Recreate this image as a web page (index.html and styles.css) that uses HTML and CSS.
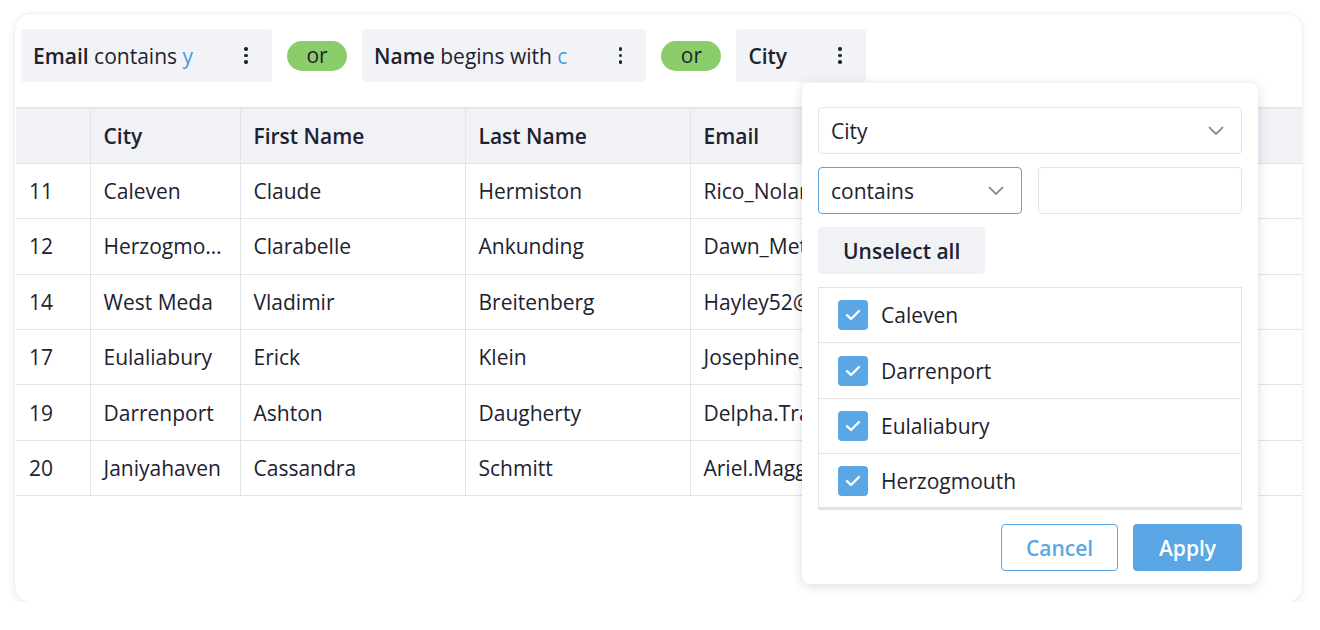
FILE: index.html
```html
<!DOCTYPE html>
<html lang="en">
<head>
<meta charset="utf-8">
<title>Filtered table</title>
<link rel="stylesheet" href="styles.css">
</head>
<body>
<div class="card">
  <div class="filters">
    <div class="chip">
      <span class="chip-text"><b>Email</b> contains <span class="val">y</span></span>
      <span class="dots"><i></i><i></i><i></i></span>
    </div>
    <span class="or">or</span>
    <div class="chip">
      <span class="chip-text"><b>Name</b> begins with <span class="val">c</span></span>
      <span class="dots"><i></i><i></i><i></i></span>
    </div>
    <span class="or">or</span>
    <div class="chip">
      <span class="chip-text"><b>City</b></span>
      <span class="dots"><i></i><i></i><i></i></span>
    </div>
  </div>

  <table class="grid">
    <colgroup>
      <col class="c-id"><col class="c-city"><col class="c-name"><col class="c-name"><col>
    </colgroup>
    <thead>
      <tr><th></th><th>City</th><th>First Name</th><th>Last Name</th><th>Email</th></tr>
    </thead>
    <tbody>
      <tr><td>11</td><td>Caleven</td><td>Claude</td><td>Hermiston</td><td>Rico_Nolan@gmail.com</td></tr>
      <tr><td>12</td><td>Herzogmouth</td><td>Clarabelle</td><td>Ankunding</td><td>Dawn_Metz@yahoo.com</td></tr>
      <tr><td>14</td><td>West Meda</td><td>Vladimir</td><td>Breitenberg</td><td>Hayley52@hotmail.com</td></tr>
      <tr><td>17</td><td>Eulaliabury</td><td>Erick</td><td>Klein</td><td>Josephine_Kub@gmail.com</td></tr>
      <tr><td>19</td><td>Darrenport</td><td>Ashton</td><td>Daugherty</td><td>Delpha.Trantow@yahoo.com</td></tr>
      <tr><td>20</td><td>Janiyahaven</td><td>Cassandra</td><td>Schmitt</td><td>Ariel.Maggio@hotmail.com</td></tr>
    </tbody>
  </table>

  <div class="panel">
    <div class="select wide">
      <span>City</span>
      <svg class="chev" width="16" height="10" viewBox="0 0 16 10"><path d="M1.5 1.5 8 8l6.5-6.5" fill="none" stroke="#8b9099" stroke-width="1.8" stroke-linecap="round" stroke-linejoin="round"/></svg>
    </div>
    <div class="pair">
      <div class="select focus">
        <span>contains</span>
        <svg class="chev" width="16" height="10" viewBox="0 0 16 10"><path d="M1.5 1.5 8 8l6.5-6.5" fill="none" stroke="#8b9099" stroke-width="1.8" stroke-linecap="round" stroke-linejoin="round"/></svg>
      </div>
      <div class="input"></div>
    </div>
    <div><button class="ghost">Unselect all</button></div>
    <ul class="list">
      <li><span class="box"><svg width="16" height="12" viewBox="0 0 16 12"><path d="M2 6.2 6 10l8-8" fill="none" stroke="#fff" stroke-width="2.4" stroke-linecap="round" stroke-linejoin="round"/></svg></span>Caleven</li>
      <li><span class="box"><svg width="16" height="12" viewBox="0 0 16 12"><path d="M2 6.2 6 10l8-8" fill="none" stroke="#fff" stroke-width="2.4" stroke-linecap="round" stroke-linejoin="round"/></svg></span>Darrenport</li>
      <li><span class="box"><svg width="16" height="12" viewBox="0 0 16 12"><path d="M2 6.2 6 10l8-8" fill="none" stroke="#fff" stroke-width="2.4" stroke-linecap="round" stroke-linejoin="round"/></svg></span>Eulaliabury</li>
      <li><span class="box"><svg width="16" height="12" viewBox="0 0 16 12"><path d="M2 6.2 6 10l8-8" fill="none" stroke="#fff" stroke-width="2.4" stroke-linecap="round" stroke-linejoin="round"/></svg></span>Herzogmouth</li>
    </ul>
    <div class="actions">
      <button class="btn cancel">Cancel</button>
      <button class="btn apply">Apply</button>
    </div>
  </div>
</div>
</body>
</html>
```
FILE: styles.css
```css
* { box-sizing: border-box; }

html, body {
  margin: 0;
  background: #ffffff;
  font-family: "Open Sans", "Noto Sans", sans-serif;
  color: #1d2230;
  font-size: 21px;
}

.card {
  position: relative;
  margin: 14px 18px 0 15px;
  height: 588px;
  background: #fff;
  border-radius: 16px;
  box-shadow: 0 0 0 1px #f1f2f4, 0 2px 8px rgba(30, 40, 60, 0.10);
  padding: 15px 0 0 1px;
}

/* filter bar */
.filters {
  display: flex;
  align-items: center;
  gap: 15px;
  padding-left: 5px;
}

.chip {
  display: flex;
  align-items: center;
  height: 53px;
  padding: 0 14px 0 12px;
  background: #f2f3f7;
  border-radius: 4px;
  gap: 41px;
}

.chip-text { white-space: nowrap; }
.chip-text b { font-weight: 600; }
.val { color: #4b9bd9; }

.dots {
  width: 24px;
  display: flex;
  flex-direction: column;
  align-items: center;
  gap: 3px;
}
.dots i {
  display: block;
  width: 3.6px;
  height: 3.6px;
  border-radius: 50%;
  background: #1d2230;
}

.or {
  width: 60px;
  height: 30px;
  line-height: 29px;
  text-align: center;
  border-radius: 15px;
  background: #8ccd6b;
  color: #1d2230;
}

/* table */
.grid {
  margin-top: 25px;
  width: 1286px;
  border-collapse: collapse;
  table-layout: fixed;
}
.c-id { width: 74px; }
.c-city { width: 150px; }
.c-name { width: 225px; }

.grid th, .grid td {
  height: 55.4px;
  padding: 0 13px;
  text-align: left;
  white-space: nowrap;
  overflow: hidden;
  text-overflow: ellipsis;
  border: 1.5px solid #e3e4e8;
}
.grid th:first-child, .grid td:first-child { border-left: none; }
.grid th:last-child, .grid td:last-child { border-right: none; }
.grid th {
  font-weight: 600;
  background: #f1f2f6;
  border-top: 2px solid #e6e7eb;
}
.grid td { font-weight: 400; }

/* filter popover */
.panel {
  position: absolute;
  left: 787px;
  top: 69px;
  width: 456px;
  height: 501px;
  background: #fff;
  border-radius: 8px;
  box-shadow: 0 2px 12px rgba(30, 40, 60, 0.16);
  padding: 24px 16px 13px;
  display: flex;
  flex-direction: column;
  gap: 13px;
}

.select, .input {
  height: 47px;
  border: 1.5px solid #e2e3e7;
  border-radius: 4px;
  background: #fff;
}
.select {
  display: flex;
  align-items: center;
  justify-content: space-between;
  padding: 0 17px 0 12px;
}
.select.focus { border-color: #5aa3dc; }
.chev { display: block; }

.pair {
  display: grid;
  grid-template-columns: 1fr 1fr;
  gap: 16px;
}

.ghost {
  height: 47px;
  padding: 0 25px;
  border: none;
  border-radius: 4px;
  background: #f1f2f6;
  font: 600 21px "Open Sans", "Noto Sans", sans-serif;
  color: #1d2230;
}

.list {
  list-style: none;
  margin: 0 0 1px;
  padding: 0;
  height: 223px;
  overflow: hidden;
  border: 1.5px solid #e2e3e7;
  border-bottom-width: 3px;
}
.list li {
  display: flex;
  align-items: center;
  gap: 13px;
  height: 55.4px;
  padding-left: 19px;
  border-bottom: 1.5px solid #e2e3e7;
}
.box {
  width: 30px;
  height: 30px;
  border-radius: 4px;
  background: #5ba7e5;
  display: flex;
  align-items: center;
  justify-content: center;
}
.box svg { display: block; }

.actions {
  display: flex;
  justify-content: flex-end;
  gap: 15px;
}
.btn {
  height: 47px;
  border-radius: 4px;
  font: 600 21px "Open Sans", "Noto Sans", sans-serif;
}
.cancel {
  width: 117px;
  background: #fff;
  border: 1.5px solid #5ba7e5;
  color: #5ba7e5;
}
.apply {
  width: 109px;
  background: #5ba7e5;
  border: none;
  color: #fff;
}
```
